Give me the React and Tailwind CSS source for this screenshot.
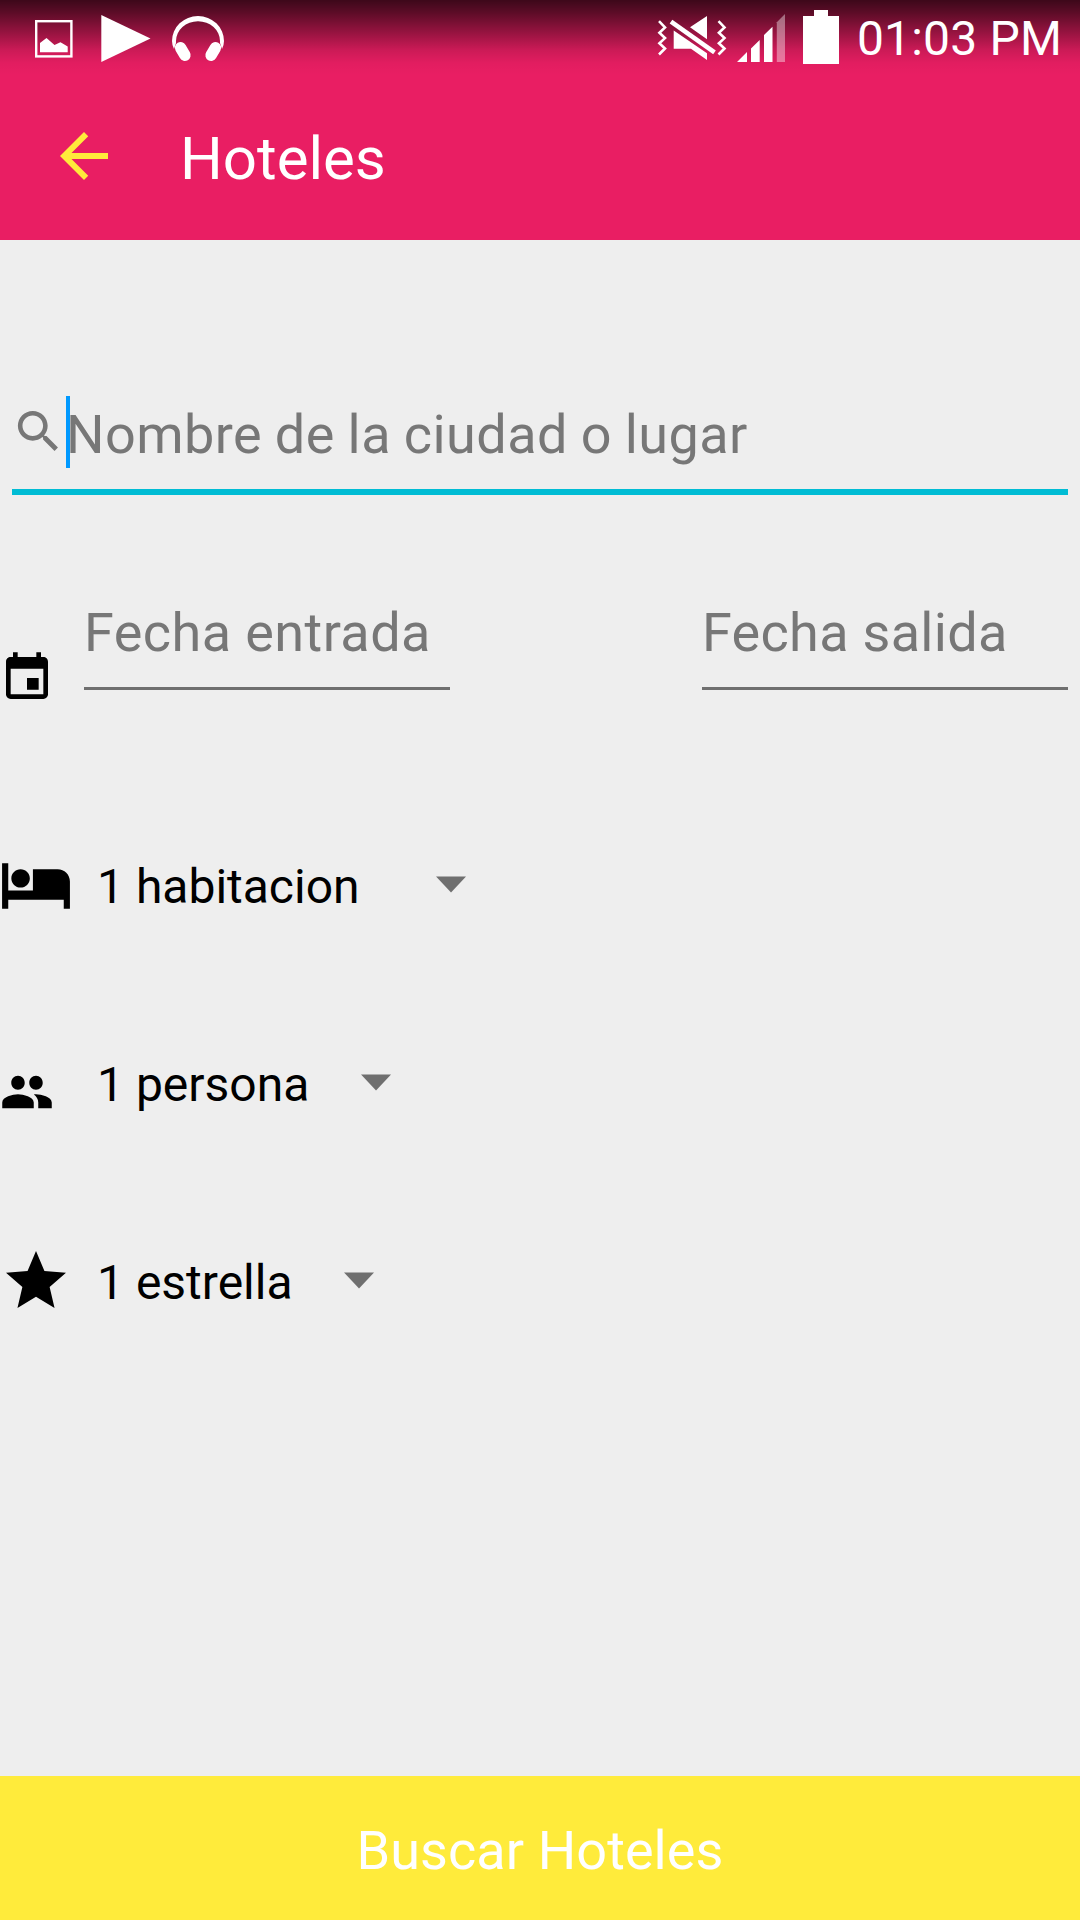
function PictureIcon() {
  return (
    <svg className="h-[72px] w-[38px]" viewBox="0 0 38 72" fill="#fff">
      <rect x="1.2" y="21.2" width="35.2" height="35.2" fill="none" stroke="#fff" strokeWidth="2.4" />
      <path d="M5 43L11.5 38L19.5 45L25.5 42.3L32.7 46.5V52.3H5Z" />
    </svg>
  )
}

function PlayIcon() {
  return (
    <svg className="ml-7 h-[72px] w-[50px]" viewBox="0 0 50 72" fill="#fff">
      <path d="M0.3 15L49.5 38.5L0.3 62Z" />
    </svg>
  )
}

function HeadphonesIcon() {
  return (
    <svg className="ml-[21px] h-[72px] w-[52px]" viewBox="0 0 52 72" fill="#fff">
      <path d="M0 41A26 25 0 0 1 52 41Q52 45 50 49L48 43V41A22 19.7 0 0 0 4 41V43L2 49Q0 45 0 41Z" />
      <path d="M8.6 47.8L12.9 55.2M43.4 47.8L39.1 55.2" stroke="#fff" strokeWidth="11.5" strokeLinecap="round" />
    </svg>
  )
}

function MutedIcon() {
  return (
    <svg className="h-[72px] w-[70px]" viewBox="0 0 70 72" fill="#fff">
      <g fill="none" stroke="#fff" strokeWidth="2.6">
        <path d="M2 21.2L8 27.4L2.4 32.8L8 38.1L2.4 43.3L8 48.5L2 54.5" />
        <path d="M61.5 21.2L67.5 27.4L61.9 32.8L67.5 38.1L61.9 43.3L67.5 48.5L61.5 54.5" />
      </g>
      <path d="M33 27.3L50 16V39.3ZM16.7 30.5V48.7H34L50 60V53.3Z" />
      <path d="M14 21.7L57.5 52.3" stroke="#fff" strokeWidth="4.6" />
    </svg>
  )
}

function SignalIcon() {
  return (
    <svg className="ml-2.5 h-[72px] w-12" viewBox="0 0 48 72" fill="#fff">
      <path d="M0 62L10 52V62ZM14 62V48.5L22.7 40V62ZM27 62V35L35.5 26.7V62Z" />
      <path d="M39.8 62V22.3L48 14V62Z" opacity="0.4" />
    </svg>
  )
}

function BatteryIcon() {
  return (
    <svg className="ml-[18px] h-[72px] w-9" viewBox="0 0 36 72" fill="#fff">
      <path d="M11 10H25V16H36V64H0V16H11Z" />
    </svg>
  )
}

function StatusBar() {
  return (
    <div className="flex h-[75px] items-start bg-[linear-gradient(to_bottom,rgba(0,0,0,0.74)_0px,rgba(0,0,0,0.6)_13px,rgba(0,0,0,0.35)_33px,rgba(0,0,0,0.13)_50px,rgba(0,0,0,0.03)_63px,rgba(0,0,0,0)_75px)] pr-[18px] pl-[35px]">
      <PictureIcon />
      <PlayIcon />
      <HeadphonesIcon />
      <div className="ml-auto flex">
        <MutedIcon />
        <SignalIcon />
        <BatteryIcon />
        <span className="ml-[18px] h-[75px] text-[48px] leading-[77px] tracking-[0.18px] whitespace-nowrap text-white">01:03 PM</span>
      </div>
    </div>
  )
}

function Toolbar() {
  return (
    <div className="flex h-[165px] pl-12">
      <svg className="mt-[45px] size-[72px]" viewBox="0 0 24 24" fill="#ffeb3b">
        <path d="M20 11H7.83l5.59-5.59L12 4l-8 8 8 8 1.41-1.41L7.83 13H20v-2z" />
      </svg>
      <h1 className="ml-[60px] text-[60px] leading-[167px] text-white">Hoteles</h1>
    </div>
  )
}

function DateField({ label, className }) {
  return (
    <div className={`h-[115px] w-[366px] border-b-[3px] border-[#6f6f6f] text-[54px] leading-[115px] whitespace-nowrap text-[#777] ${className}`}>
      {label}
    </div>
  )
}

function Spinner({ icon, label, gap }) {
  return (
    <div className="flex h-[198px] items-center">
      <div className="flex w-[97px] shrink-0">{icon}</div>
      <span className="text-[48px] leading-[56px] whitespace-nowrap">{label}</span>
      <svg className={`mb-[5px] h-[17px] w-[30px] ${gap}`} viewBox="0 0 30 17" fill="#6f6f6f">
        <path d="M0 0.5H30L15 16.5Z" />
      </svg>
    </div>
  )
}

const bedIcon = (
  <svg className="mb-[5px] -ml-px h-[73px] w-[74px]" viewBox="0 0 24 24" preserveAspectRatio="none">
    <path d="M7 13c1.66 0 3-1.34 3-3S8.66 7 7 7s-3 1.34-3 3 1.34 3 3 3zm12-6h-8v7H3V5H1v15h2v-3h18v3h2v-9c0-2.21-1.79-4-4-4z" />
  </svg>
)

const peopleIcon = (
  <svg className="mt-[14px] h-[56px] w-[54px]" viewBox="0 0 24 24" preserveAspectRatio="none">
    <path d="M16 11c1.66 0 2.99-1.34 2.99-3S17.66 5 16 5c-1.66 0-3 1.34-3 3s1.34 3 3 3zm-8 0c1.66 0 2.99-1.34 2.99-3S9.66 5 8 5C6.34 5 5 6.34 5 8s1.34 3 3 3zm0 2c-2.33 0-7 1.17-7 3.5V19h14v-2.5c0-2.33-4.67-3.5-7-3.5zm8 0c-.29 0-.62.02-.97.05 1.16.84 1.97 1.97 1.97 3.45V19h6v-2.5c0-2.33-4.67-3.5-7-3.5z" />
  </svg>
)

const starIcon = (
  <svg className="mb-1 size-[72px]" viewBox="0 0 24 24">
    <path d="M12 17.27L18.18 21l-1.64-7.03L22 9.24l-7.19-.61L12 2 9.19 8.63 2 9.24l5.46 4.73L5.82 21z" />
  </svg>
)

export default function App() {
  return (
    <div className="flex h-[1920px] w-[1080px] flex-col overflow-hidden bg-[#eee] font-['Roboto',sans-serif] text-black">
      <header className="h-60 bg-[#e91e63]">
        <StatusBar />
        <Toolbar />
      </header>

      <main className="flex flex-1 flex-col">
        <div className="mx-3 mt-[140px] flex h-[115px] border-b-[6px] border-[#00bcd4]">
          <svg className="mt-6 -ml-px size-[55px] shrink-0" viewBox="0 0 24 24" fill="#777">
            <path d="M15.5 14h-.79l-.28-.27C15.41 12.59 16 11.11 16 9.5 16 5.91 13.09 3 9.5 3S3 5.91 3 9.5 5.91 16 9.5 16c1.61 0 3.09-.59 4.23-1.57l.27.28v.79l5 4.99L20.49 19l-4.99-5zm-6 0C7.01 14 5 11.99 5 9.5S7.01 5 9.5 5 14 7.01 14 9.5 11.99 14 9.5 14z" />
          </svg>
          <div className="relative h-[109px] text-[54px] leading-[109px] tracking-[0.43px] whitespace-nowrap text-[#777] [word-spacing:-1px]">
            Nombre de la ciudad o lugar
            <span className="absolute top-4 left-0 h-[72px] w-1 bg-[#0099ff]" />
          </div>
        </div>

        <div className="mt-20 flex pr-3">
          <svg className="mt-[75px] -ml-px size-14 shrink-0" viewBox="0 0 24 24">
            <path d="M17 12h-5v5h5v-5zM16 1v2H8V1H6v2H5c-1.11 0-1.99.9-1.99 2L3 19c0 1.1.89 2 2 2h14c1.1 0 2-.9 2-2V5c0-1.1-.9-2-2-2h-1V1h-2zm3 18H5V8h14v11z" />
          </svg>
          <DateField label="Fecha entrada" className="ml-[29px] tracking-[0.43px]" />
          <DateField label="Fecha salida" className="ml-auto tracking-[0.3px]" />
        </div>

        <div className="mt-[82px]">
          <Spinner icon={bedIcon} label="1 habitacion" gap="ml-[76px]" />
          <Spinner icon={peopleIcon} label="1 persona" gap="ml-[52px]" />
          <Spinner icon={starIcon} label="1 estrella" gap="ml-[51px]" />
        </div>
      </main>

      <button className="h-36 shrink-0 bg-[#ffeb3b] text-[54px] leading-[149px] tracking-[0.08px] text-white">
        <span className="block h-36">Buscar Hoteles</span>
      </button>
    </div>
  )
}
